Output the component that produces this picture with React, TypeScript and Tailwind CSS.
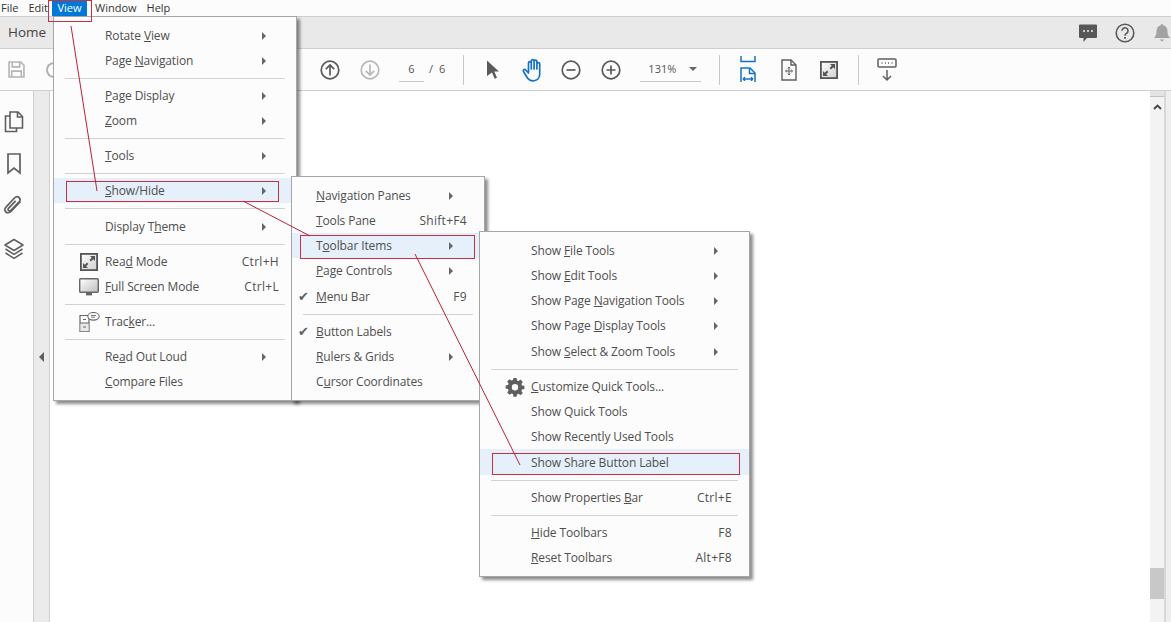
import type { ReactNode } from "react";

type MenuRow =
  | { sep: true; wide?: boolean }
  | { sep?: false; label: ReactNode; key?: string; arrow?: boolean; active?: boolean; icon?: ReactNode; check?: boolean; tall?: boolean };

const sep: MenuRow = { sep: true };

function Gear() {
  return (
    <svg width="20" height="20" viewBox="0 0 20 20">
      <path
        fill="#5f5f5f"
        fillRule="evenodd"
        d="M8.400 1h3.200l.4 2.400 1.500.6 2-1.400 2.300 2.300-1.400 2 .6 1.500 2.400.4v3.200l-2.400.4-.6 1.500 1.400 2-2.300 2.300-2-1.400-1.500.6-.4 2.400H8.400L8 17l-1.500-.6-2 1.400-2.300-2.300 1.400-2L3 12l-2.400-.4V8.400L3 8l.6-1.500-1.400-2 2.300-2.300 2 1.400L8 3zM10 7a3.200 3.200 0 1 0 0 6.400A3.200 3.200 0 0 0 10 7z"
      />
    </svg>
  );
}

function ReadModeIcon({ size = 18 }: { size?: number }) {
  return (
    <svg width={size} height={size} viewBox="0 0 18 18">
      <defs>
        <linearGradient id="readfill" x1="0" y1="0" x2="1" y2="1">
          <stop offset="0" stopColor="#fff" />
          <stop offset="1" stopColor="#cfcfcf" />
        </linearGradient>
      </defs>
      <rect x="0.900" y="0.900" width="16.200" height="16.200" fill="url(#readfill)" stroke="#555" strokeWidth="1.800" />
      <path fill="#555" d="M10 3h5v5l-1.800-1.800-2.200 2.200-1.400-1.400 2.200-2.200zM8 15H3v-5l1.800 1.800L7 9.600 8.400 11l-2.200 2.200z" />
    </svg>
  );
}

function FullScreenIcon() {
  return (
    <svg width="20" height="18" viewBox="0 0 20 18">
      <defs>
        <linearGradient id="screen" x1="0" y1="0" x2="1" y2="1">
          <stop offset="0" stopColor="#fff" />
          <stop offset="1" stopColor="#bdbdbd" />
        </linearGradient>
      </defs>
      <rect x="0.700" y="0.700" width="18.600" height="13.600" rx="1" fill="url(#screen)" stroke="#666" strokeWidth="1.400" />
      <rect x="7" y="15" width="6" height="2.400" fill="#666" />
    </svg>
  );
}

function TrackerIcon() {
  return (
    <svg width="21" height="20" viewBox="0 0 21 20">
      <path d="M1 3.500h9v16H1z" fill="#fff" stroke="#666" strokeWidth="1.200" />
      <rect x="1" y="11" width="9" height="8.500" fill="#d8d8d8" opacity="0.600" />
      <path d="M1 11h9M4 7.500h3M4 15h3" stroke="#666" strokeWidth="1.200" />
      <ellipse cx="14.500" cy="4.300" rx="5.700" ry="3.800" fill="#fff" stroke="#666" strokeWidth="1.100" />
      <path d="M12 3.500h5M12 5.200h4" stroke="#666" strokeWidth="0.900" />
    </svg>
  );
}

const viewMenu: MenuRow[] = [
  { label: <>Rotate <u>V</u>iew</>, arrow: true },
  { label: <>Page <u>N</u>avigation</>, arrow: true },
  sep,
  { label: <><u>P</u>age Display</>, arrow: true },
  { label: <><u>Z</u>oom</>, arrow: true },
  sep,
  { label: <><u>T</u>ools</>, arrow: true },
  sep,
  { label: <><u>S</u>how/Hide</>, arrow: true, active: true },
  { sep: true, wide: true },
  { label: <>Display T<u>h</u>eme</>, arrow: true },
  sep,
  { label: <>Rea<u>d</u> Mode</>, key: "Ctrl+H", icon: <ReadModeIcon /> },
  { label: <><u>F</u>ull Screen Mode</>, key: "Ctrl+L", icon: <FullScreenIcon /> },
  sep,
  { label: <>Trac<u>k</u>er...</>, icon: <TrackerIcon /> },
  sep,
  { label: <>Re<u>a</u>d Out Loud</>, arrow: true },
  { label: <><u>C</u>ompare Files</> },
];

const showHideMenu: MenuRow[] = [
  { label: <><u>N</u>avigation Panes</>, arrow: true },
  { label: <><u>T</u>ools Pane</>, key: "Shift+F4" },
  { label: <>T<u>o</u>olbar Items</>, arrow: true, active: true },
  { label: <><u>P</u>age Controls</>, arrow: true },
  { label: <><u>M</u>enu Bar</>, key: "F9", check: true, tall: true },
  sep,
  { label: <><u>B</u>utton Labels</>, check: true },
  { label: <><u>R</u>ulers &amp; Grids</>, arrow: true },
  { label: <>C<u>u</u>rsor Coordinates</> },
];

const toolbarMenu: MenuRow[] = [
  { label: <>Show <u>F</u>ile Tools</>, arrow: true },
  { label: <>Show <u>E</u>dit Tools</>, arrow: true },
  { label: <>Show Page <u>N</u>avigation Tools</>, arrow: true },
  { label: <>Show Page <u>D</u>isplay Tools</>, arrow: true },
  { label: <>Show <u>S</u>elect &amp; Zoom Tools</>, arrow: true, tall: true },
  sep,
  { label: <><u>C</u>ustomize Quick Tools...</>, icon: <Gear /> },
  { label: "Show Quick Tools" },
  { label: "Show Recently Used Tools" },
  { label: "Show Share Button Label", active: true, tall: true },
  sep,
  { label: <>Show Properties <u>B</u>ar</>, key: "Ctrl+E" },
  sep,
  { label: <><u>H</u>ide Toolbars</>, key: "F8" },
  { label: <><u>R</u>eset Toolbars</>, key: "Alt+F8" },
];

function Menu({ rows, className, labelLeft, arrowRight }: { rows: MenuRow[]; className: string; labelLeft: string; arrowRight: string }) {
  return (
    <div className={`absolute border border-[#a6a6a6] bg-[#fcfcfc] pt-[6px] pb-[6px] tracking-[-0.12px] shadow-[3px_3px_3px_rgba(0,0,0,0.45)] ${className}`}>
      {rows.map((row, i) =>
        row.sep ? (
          <div key={i} className={`flex items-center px-[11px] ${row.wide ? "h-[11px]" : "h-[10px]"}`}>
            <div className="h-px w-full bg-[#d2d2d2]" />
          </div>
        ) : (
          <div key={i} className={`relative flex items-center ${row.tall ? "h-[26px] pt-px" : "h-[25px]"} ${row.active ? "bg-[#e5f0fb]" : ""}`}>
            {row.icon && <span className="absolute flex h-[25px] w-[30px] items-center justify-center" style={{ left: `calc(${labelLeft} - 31px)` }}>{row.icon}</span>}
            {row.check && <span className="absolute left-[6px] text-[13px] text-[#5f5f5f]">✔</span>}
            <span style={{ marginLeft: labelLeft }} className="whitespace-nowrap">{row.label}</span>
            {row.key && <span className="ml-auto mr-[17px] whitespace-nowrap tracking-[0.3px]">{row.key}</span>}
            {row.arrow && (
              <span className="absolute h-0 w-0 border-y-[4px] border-l-[4px] border-y-transparent border-l-[#666]" style={{ right: arrowRight }} />
            )}
          </div>
        ),
      )}
    </div>
  );
}

function CircleIcon({ kind, color = "#5a5a5a" }: { kind: "up" | "down" | "minus" | "plus"; color?: string }) {
  return (
    <svg width="20" height="20" viewBox="0 0 20 20" fill="none" stroke={color} strokeWidth="1.700">
      <circle cx="10" cy="10" r="8.800" />
      {kind === "up" && <path d="M10 15.500V5M5.800 9.200 10 5l4.200 4.200" />}
      {kind === "down" && <path d="M10 4.500V15M5.800 10.800 10 15l4.200-4.200" />}
      {kind === "minus" && <path d="M5.500 10h9" />}
      {kind === "plus" && <path d="M5.500 10h9M10 5.500v9" />}
    </svg>
  );
}

function ToolSep({ className }: { className: string }) {
  return <div className={`h-[30px] w-px bg-[#c8c8c8] ${className}`} />;
}

export default function App() {
  return (
    <div className="relative flex h-[622px] w-[1171px] flex-col overflow-hidden bg-white text-[12px] text-[#4f4f4f] [font-family:'Open_Sans','Noto_Sans',sans-serif]">
      {/* menu bar */}
      <div className="flex h-[16px] items-center bg-[#fcfcfc] text-[11px] text-[#333]">
        <span className="ml-[1px]">File</span>
        <span className="ml-[10px]">Edit</span>
        <span className="ml-[4px] flex h-[16px] w-[35px] items-center justify-center bg-[#0078d7] text-white">View</span>
        <span className="ml-[8px]">Window</span>
        <span className="ml-[10px]">Help</span>
      </div>

      {/* tab bar */}
      <div className="flex h-[33px] items-center border-y border-[#cfcfcf] bg-[#e9e9e9] pl-[8px]">
        <span className="text-[13.5px] text-[#444]">Home</span>
        <div className="ml-auto flex items-center">
          <svg width="20" height="20" viewBox="0 0 20 20" className="mr-[17px]">
            <path fill="#585858" d="M2 1.500h16a1 1 0 0 1 1 1V14a1 1 0 0 1-1 1H9l-3.500 4v-4H2a1 1 0 0 1-1-1V2.500a1 1 0 0 1 1-1z" />
            <circle cx="6" cy="8" r="1" fill="#eee" />
            <circle cx="10" cy="8" r="1" fill="#eee" />
            <circle cx="14" cy="8" r="1" fill="#eee" />
          </svg>
          <svg width="20" height="20" viewBox="0 0 20 20" className="mr-[18px]" fill="none" stroke="#5a5a5a">
            <circle cx="10" cy="10" r="8.800" strokeWidth="1.600" />
            <path d="M7 7.800a3 3 0 1 1 4.600 2.500c-1 .7-1.600 1-1.600 2.400" strokeWidth="1.600" />
            <path d="M10 14v1.800" strokeWidth="1.800" />
          </svg>
          <svg width="18" height="20" viewBox="0 0 18 20">
            <path fill="#a2a2a2" d="M9 1a1.500 1.500 0 0 1 1.500 1.500c3 .8 4 3 4 6 0 3 .8 4.500 2.500 6.500H1c1.700-2 2.500-3.500 2.500-6.500 0-3 1-5.200 4-6A1.500 1.500 0 0 1 9 1zM6.500 16.500h5L9 18.500z" />
          </svg>
        </div>
      </div>

      {/* toolbar */}
      <div className="flex h-[42px] items-center border-b border-[#cfcfcf] bg-[#fcfcfc]">
        <svg width="17" height="17" viewBox="0 0 16 16" className="ml-[8px]" fill="none" stroke="#b4b4b4" strokeWidth="1.500">
          <path d="M1 1h11l3 3v11H1z" />
          <path d="M4 1v4.500h7V1M3.500 15V9.500h9V15" />
        </svg>
        <div className="ml-[21px] h-[16px] w-[14px] rounded-l-full border-2 border-r-0 border-[#b4b4b4]" />
        <div className="ml-[260px]"><CircleIcon kind="up" /></div>
        <div className="ml-[20px]"><CircleIcon kind="down" color="#b8b8b8" /></div>
        <div className="ml-[19px] flex h-[25px] w-[25px] items-center justify-center border-b border-[#c8c8c8] text-[11px] text-[#555]">6</div>
        <span className="ml-[5px] text-[11px] text-[#555]">/</span>
        <span className="ml-[6px] text-[11px] text-[#555]">6</span>
        <ToolSep className="ml-[18px]" />
        <svg width="14" height="20" viewBox="0 0 14 20" className="ml-[22px]">
          <path fill="#5a5a5a" d="M1 0.500 13 11.500H8.300l2.700 6.300-2.300 1-2.700-6.300L1 16z" />
        </svg>
        <svg width="24" height="24" viewBox="0 0 24 24" className="ml-[21px]" fill="none" stroke="#1473c6" strokeWidth="1.700" strokeLinecap="round" strokeLinejoin="round">
          <path d="M7.500 14V5a1.400 1.400 0 0 1 2.800 0v6M10.300 11V3a1.400 1.400 0 0 1 2.800 0v8M13.100 11V3.500a1.400 1.400 0 0 1 2.800 0V11M15.900 11V6a1.400 1.400 0 0 1 2.800 0v10c0 4-2.700 6.800-6.500 6.800-3 0-4.700-1.200-6.200-3.600L2.500 13.500c-.9-1.500 1-2.800 2.200-1.500l2.800 3" />
        </svg>
        <div className="ml-[16px]"><CircleIcon kind="minus" /></div>
        <div className="ml-[20px]"><CircleIcon kind="plus" /></div>
        <div className="ml-[19px] flex h-[25px] w-[61px] items-center border-b border-[#c8c8c8] pl-[8px] text-[11px] text-[#555]">
          131%
          <span className="ml-[13px] h-0 w-0 border-x-[4px] border-t-[4px] border-x-transparent border-t-[#666]" />
        </div>
        <ToolSep className="ml-[18px]" />
        <svg width="18" height="27" viewBox="0 0 18 27" className="ml-[19px]" fill="none" stroke="#1473c6" strokeWidth="1.500">
          <path d="M2 0v5.500h14V0M2 26V12h9l5 5v9" />
          <path d="M10.500 12v5.500H16M4 23h10M4 23l2-1.800M4 23l2 1.800M14 23l-2-1.800M14 23l-2 1.800" />
        </svg>
        <svg width="16" height="22" viewBox="0 0 16 22" className="ml-[24px]" fill="none" stroke="#5f5f5f" strokeWidth="1.400">
          <path d="M1 1h9l5 5v15H1z" />
          <path d="M10 1v5h5" />
          <path d="M8 8v8M4.500 12h7M6.800 9.400 8 8l1.200 1.400M6.800 14.600 8 16l1.200-1.400M5.800 10.800 4.500 12l1.300 1.200M10.200 10.800l1.300 1.200-1.300 1.200" strokeWidth="1" />
        </svg>
        <div className="ml-[23px]"><ReadModeIcon size={18} /></div>
        <ToolSep className="ml-[20px]" />
        <svg width="20" height="24" viewBox="0 0 20 24" className="ml-[18px]" fill="none" stroke="#5f5f5f" strokeWidth="1.500">
          <rect x="1" y="1" width="18" height="8" rx="1" />
          <path d="M4.500 5h1M8 5h1M11 5h1M14.500 5h1" strokeWidth="1.400" />
          <path d="M10 12v10M6 18l4 4 4-4" />
        </svg>
      </div>

      {/* workspace */}
      <div className="flex flex-1">
        <div className="flex w-[34px] flex-col items-center border-r border-[#d0d0d0] bg-[#fcfcfc] pt-[19px]">
          <svg width="20" height="22" viewBox="0 0 20 22" fill="none" stroke="#5f5f5f" strokeWidth="1.600" className="ml-[-6px] mt-[1px]">
            <path d="M6 5H1.500v15.500h11V17" />
            <path d="M6 1h8l4.500 4.500V17H6z" />
            <path d="M13.500 1v5h5" />
          </svg>
          <svg width="16" height="22" viewBox="0 0 16 22" fill="none" stroke="#5f5f5f" strokeWidth="1.700" className="ml-[-6px] mt-[20px]">
            <path d="M2 1h12v19l-6-5-6 5z" />
          </svg>
          <svg width="20" height="22" viewBox="0 0 20 22" fill="none" stroke="#5f5f5f" strokeWidth="1.700" className="ml-[-7px] mt-[20px]">
            <path d="M17.500 6.500 8 16.500c-1.500 1.600-4 1.600-5.200.3-1.300-1.400-1-3.600.4-5L11.500 3c1.600-1.500 3.500-1.500 4.700-.3 1.200 1.200 1 3-.3 4.400l-8 8.200c-.7.700-1.800.8-2.400.2-.6-.6-.5-1.600.2-2.400l7-7.300" />
          </svg>
          <svg width="20" height="22" viewBox="0 0 20 22" fill="none" stroke="#5f5f5f" strokeWidth="1.500" strokeLinejoin="round" className="ml-[-6px] mt-[21px]">
            <path d="M10 1.500 19 7l-9 5.500L1 7z" />
            <path d="M1.500 11 10 16.300 18.500 11M1.500 15 10 20.300 18.500 15" />
          </svg>
        </div>
        <div className="flex w-[16px] items-center justify-center border-r border-[#d0d0d0] bg-[#ebebeb]">
          <span className="h-0 w-0 border-y-[5px] border-r-[5px] border-y-transparent border-r-[#5f5f5f]" />
        </div>
        <div className="flex-1 bg-white" />
        <div className="flex w-[16px] flex-col items-center border-r-2 border-[#d8d8d8] bg-[#f3f3f3]">
          <div className="h-[6px] w-full border-b border-[#c0c0c0] bg-[#e4e4e4]" />
          <svg width="9" height="6" viewBox="0 0 9 6" className="mt-[7px]" fill="none" stroke="#444" strokeWidth="1.800">
            <path d="M1 5l3.500-3.500L8 5" />
          </svg>
          <div className="mt-[458px] h-[31px] w-full bg-[#c8c8c8]" />
        </div>
        <div className="w-[5px] bg-[#eeeeee]" />
      </div>

      {/* open menus */}
      <Menu rows={viewMenu} labelLeft="51px" arrowRight="30px" className="left-[53px] top-[16px] w-[244px]" />
      <Menu rows={showHideMenu} labelLeft="24px" arrowRight="31px" className="left-[291px] top-[176px] w-[194px]" />
      <Menu rows={toolbarMenu} labelLeft="51px" arrowRight="31px" className="left-[479px] top-[231px] w-[271px]" />

      {/* red annotation boxes */}
      <div className="absolute left-[48px] top-0 h-[22px] w-[44px] border border-[#c8303f]" />
      <div className="absolute left-[66px] top-[181px] h-[21px] w-[213px] border border-[#c8303f]" />
      <div className="absolute left-[300px] top-[235px] h-[24px] w-[175px] border border-[#c8303f]" />
      <div className="absolute left-[492px] top-[453px] h-[22px] w-[248px] border border-[#c8303f]" />
      <svg className="pointer-events-none absolute left-0 top-0" width="1171" height="622" fill="none" stroke="#b8233a" strokeWidth="1">
        <path d="M71 26 97 191" />
        <path d="M243 201 310 236" />
        <path d="M415 254 520 465" />
      </svg>
    </div>
  );
}
